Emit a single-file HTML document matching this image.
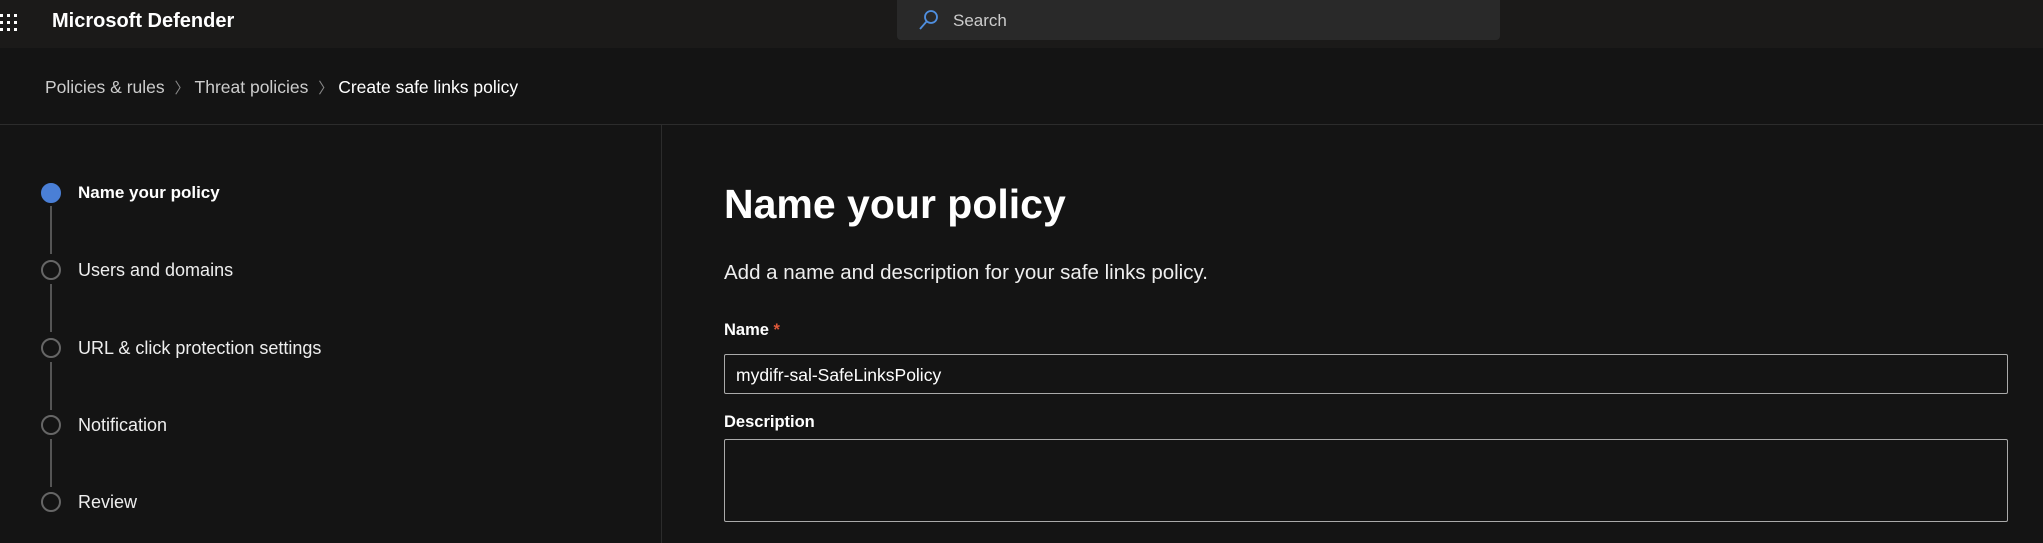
<!DOCTYPE html>
<html><head><meta charset="utf-8"><style>
*{margin:0;padding:0;box-sizing:border-box}
body{width:2043px;height:543px;background:#141414;font-family:"Liberation Sans",sans-serif;color:#fff;position:relative;overflow:hidden}
.a{position:absolute;white-space:nowrap}
.top{position:absolute;left:0;top:0;width:2043px;height:48px;background:#1b1a19}
.dot{position:absolute;width:3px;height:3px;background:#fff}
.circ{position:absolute;width:20px;height:20px;border:2px solid #666;border-radius:50%;left:41px}
.line{position:absolute;left:50px;width:2px;background:#555}
.st{position:absolute;left:78px;font-size:18px;color:#eee}
</style></head><body>
<div class="top"></div>
<div class="a" style="left:0;top:14px;width:20px;height:20px">
<div class="dot" style="left:0;top:0"></div><div class="dot" style="left:7px;top:0"></div><div class="dot" style="left:14px;top:0"></div>
<div class="dot" style="left:0;top:7px"></div><div class="dot" style="left:7px;top:7px"></div><div class="dot" style="left:14px;top:7px"></div>
<div class="dot" style="left:0;top:14px"></div><div class="dot" style="left:7px;top:14px"></div><div class="dot" style="left:14px;top:14px"></div>
</div>
<div class="a" style="left:52px;top:10px;font-size:20px;font-weight:bold">Microsoft Defender</div>
<div class="a" style="left:897px;top:0;width:603px;height:40px;background:#292929;border-radius:0 0 4px 4px"></div>
<svg class="a" style="left:918px;top:9px" width="22" height="22" viewBox="0 0 22 22"><circle cx="13" cy="8" r="6" fill="none" stroke="#4f8fe0" stroke-width="1.8"/><line x1="9" y1="12" x2="2" y2="20" stroke="#4f8fe0" stroke-width="1.8"/></svg>
<div class="a" style="left:953px;top:11px;font-size:17px;color:#ccc">Search</div>
<div class="a" style="left:45px;top:77px;font-size:17.5px;color:#ccc">Policies &amp; rules <span style="color:#888;margin:0 5px;font-size:15px">〉</span>Threat policies <span style="color:#888;margin:0 5px;font-size:15px">〉</span><span style="color:#fff">Create safe links policy</span></div>
<div class="a" style="left:0;top:124px;width:2043px;height:1px;background:#2c2c2c"></div>
<div class="a" style="left:661px;top:125px;width:1px;height:418px;background:#2c2c2c"></div>
<div class="circ" style="top:183px;background:#4a7fd6;border-color:#4a7fd6"></div>
<div class="st" style="top:183px;font-weight:bold;color:#fff;font-size:17px">Name your policy</div>
<div class="line" style="top:206px;height:48px"></div>
<div class="circ" style="top:260px"></div><div class="st" style="top:260px">Users and domains</div>
<div class="line" style="top:284px;height:48px"></div>
<div class="circ" style="top:338px"></div><div class="st" style="top:338px">URL &amp; click protection settings</div>
<div class="line" style="top:362px;height:48px"></div>
<div class="circ" style="top:415px"></div><div class="st" style="top:415px">Notification</div>
<div class="line" style="top:439px;height:48px"></div>
<div class="circ" style="top:492px"></div><div class="st" style="top:492px">Review</div>
<div class="a" style="left:724px;top:181px;font-size:41px;font-weight:bold">Name your policy</div>
<div class="a" style="left:724px;top:261px;font-size:20.5px;color:#eee">Add a name and description for your safe links policy.</div>
<div class="a" style="left:724px;top:321px;font-size:16.5px;font-weight:bold">Name <span style="color:#e0593a">*</span></div>
<div class="a" style="left:724px;top:354px;width:1284px;height:40px;border:1px solid #aaa;border-radius:2px"></div>
<div class="a" style="left:736px;top:365px;font-size:17.5px">mydifr-sal-SafeLinksPolicy</div>
<div class="a" style="left:724px;top:413px;font-size:16.5px;font-weight:bold">Description</div>
<div class="a" style="left:724px;top:439px;width:1284px;height:83px;border:1px solid #aaa;border-radius:2px"></div>
</body></html>
